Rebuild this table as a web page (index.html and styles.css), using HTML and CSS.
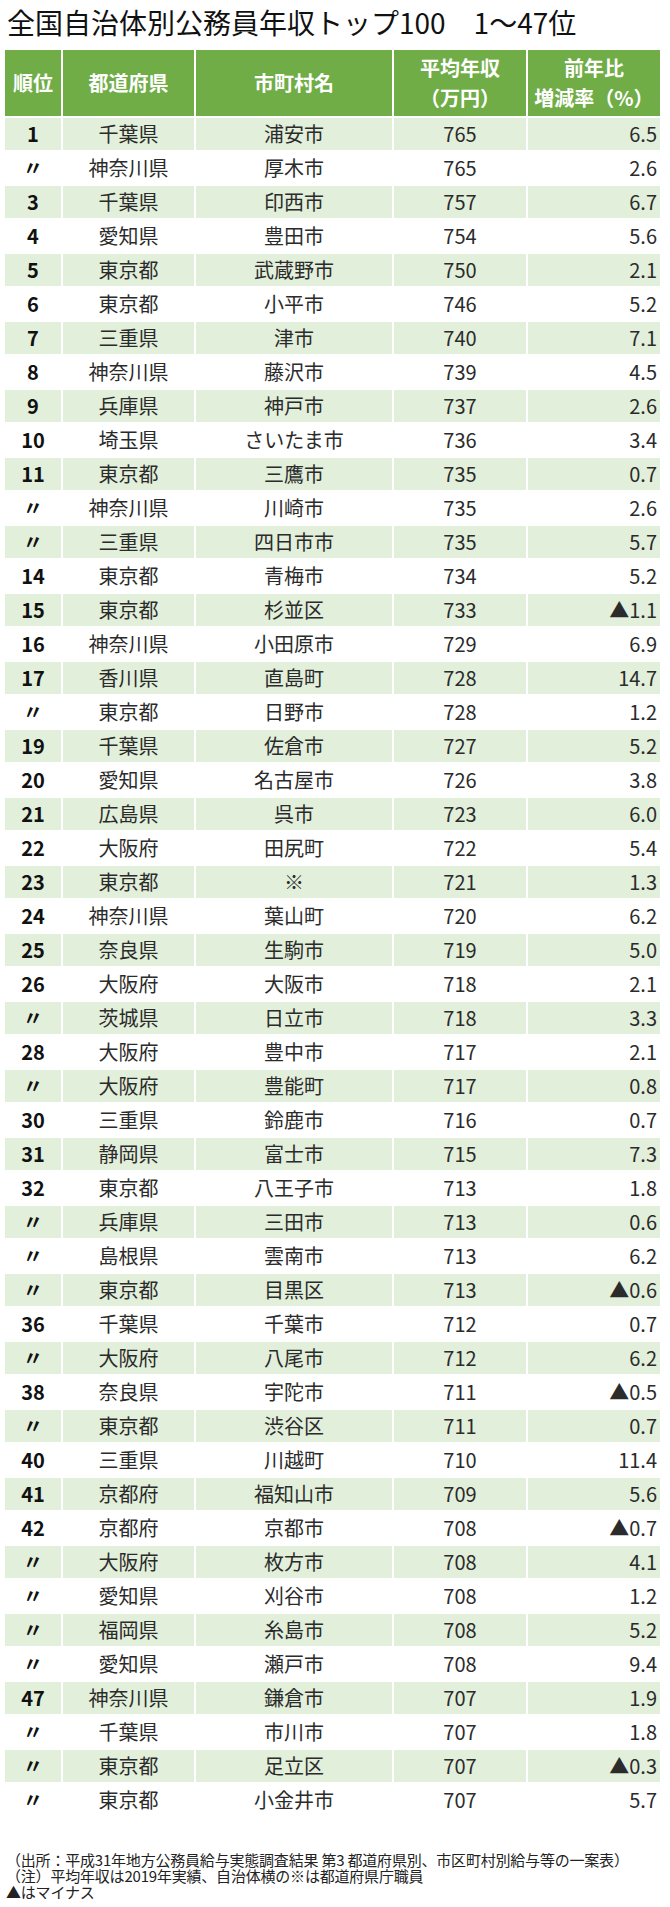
FILE: index.html
```html
<!DOCTYPE html>
<html lang="ja">
<head>
<meta charset="utf-8">
<title>全国自治体別公務員年収トップ100</title>
<link rel="stylesheet" href="styles.css">
</head>
<body>
<h1 class="title">全国自治体別公務員年収トップ100　1〜47位</h1>
<table class="rank-table">
  <colgroup>
    <col class="c-rank"><col class="c-pref"><col class="c-city"><col class="c-pay"><col class="c-rate">
  </colgroup>
  <thead>
    <tr>
      <th>順位</th>
      <th>都道府県</th>
      <th>市町村名</th>
      <th>平均年収<br>（万円）</th>
      <th>前年比<br>増減率（%）</th>
    </tr>
  </thead>
  <tbody>
    <tr><td class="rank">1</td><td>千葉県</td><td>浦安市</td><td>765</td><td class="rate">6.5</td></tr>
    <tr><td class="rank">〃</td><td>神奈川県</td><td>厚木市</td><td>765</td><td class="rate">2.6</td></tr>
    <tr><td class="rank">3</td><td>千葉県</td><td>印西市</td><td>757</td><td class="rate">6.7</td></tr>
    <tr><td class="rank">4</td><td>愛知県</td><td>豊田市</td><td>754</td><td class="rate">5.6</td></tr>
    <tr><td class="rank">5</td><td>東京都</td><td>武蔵野市</td><td>750</td><td class="rate">2.1</td></tr>
    <tr><td class="rank">6</td><td>東京都</td><td>小平市</td><td>746</td><td class="rate">5.2</td></tr>
    <tr><td class="rank">7</td><td>三重県</td><td>津市</td><td>740</td><td class="rate">7.1</td></tr>
    <tr><td class="rank">8</td><td>神奈川県</td><td>藤沢市</td><td>739</td><td class="rate">4.5</td></tr>
    <tr><td class="rank">9</td><td>兵庫県</td><td>神戸市</td><td>737</td><td class="rate">2.6</td></tr>
    <tr><td class="rank">10</td><td>埼玉県</td><td>さいたま市</td><td>736</td><td class="rate">3.4</td></tr>
    <tr><td class="rank">11</td><td>東京都</td><td>三鷹市</td><td>735</td><td class="rate">0.7</td></tr>
    <tr><td class="rank">〃</td><td>神奈川県</td><td>川崎市</td><td>735</td><td class="rate">2.6</td></tr>
    <tr><td class="rank">〃</td><td>三重県</td><td>四日市市</td><td>735</td><td class="rate">5.7</td></tr>
    <tr><td class="rank">14</td><td>東京都</td><td>青梅市</td><td>734</td><td class="rate">5.2</td></tr>
    <tr><td class="rank">15</td><td>東京都</td><td>杉並区</td><td>733</td><td class="rate">▲1.1</td></tr>
    <tr><td class="rank">16</td><td>神奈川県</td><td>小田原市</td><td>729</td><td class="rate">6.9</td></tr>
    <tr><td class="rank">17</td><td>香川県</td><td>直島町</td><td>728</td><td class="rate">14.7</td></tr>
    <tr><td class="rank">〃</td><td>東京都</td><td>日野市</td><td>728</td><td class="rate">1.2</td></tr>
    <tr><td class="rank">19</td><td>千葉県</td><td>佐倉市</td><td>727</td><td class="rate">5.2</td></tr>
    <tr><td class="rank">20</td><td>愛知県</td><td>名古屋市</td><td>726</td><td class="rate">3.8</td></tr>
    <tr><td class="rank">21</td><td>広島県</td><td>呉市</td><td>723</td><td class="rate">6.0</td></tr>
    <tr><td class="rank">22</td><td>大阪府</td><td>田尻町</td><td>722</td><td class="rate">5.4</td></tr>
    <tr><td class="rank">23</td><td>東京都</td><td>※</td><td>721</td><td class="rate">1.3</td></tr>
    <tr><td class="rank">24</td><td>神奈川県</td><td>葉山町</td><td>720</td><td class="rate">6.2</td></tr>
    <tr><td class="rank">25</td><td>奈良県</td><td>生駒市</td><td>719</td><td class="rate">5.0</td></tr>
    <tr><td class="rank">26</td><td>大阪府</td><td>大阪市</td><td>718</td><td class="rate">2.1</td></tr>
    <tr><td class="rank">〃</td><td>茨城県</td><td>日立市</td><td>718</td><td class="rate">3.3</td></tr>
    <tr><td class="rank">28</td><td>大阪府</td><td>豊中市</td><td>717</td><td class="rate">2.1</td></tr>
    <tr><td class="rank">〃</td><td>大阪府</td><td>豊能町</td><td>717</td><td class="rate">0.8</td></tr>
    <tr><td class="rank">30</td><td>三重県</td><td>鈴鹿市</td><td>716</td><td class="rate">0.7</td></tr>
    <tr><td class="rank">31</td><td>静岡県</td><td>富士市</td><td>715</td><td class="rate">7.3</td></tr>
    <tr><td class="rank">32</td><td>東京都</td><td>八王子市</td><td>713</td><td class="rate">1.8</td></tr>
    <tr><td class="rank">〃</td><td>兵庫県</td><td>三田市</td><td>713</td><td class="rate">0.6</td></tr>
    <tr><td class="rank">〃</td><td>島根県</td><td>雲南市</td><td>713</td><td class="rate">6.2</td></tr>
    <tr><td class="rank">〃</td><td>東京都</td><td>目黒区</td><td>713</td><td class="rate">▲0.6</td></tr>
    <tr><td class="rank">36</td><td>千葉県</td><td>千葉市</td><td>712</td><td class="rate">0.7</td></tr>
    <tr><td class="rank">〃</td><td>大阪府</td><td>八尾市</td><td>712</td><td class="rate">6.2</td></tr>
    <tr><td class="rank">38</td><td>奈良県</td><td>宇陀市</td><td>711</td><td class="rate">▲0.5</td></tr>
    <tr><td class="rank">〃</td><td>東京都</td><td>渋谷区</td><td>711</td><td class="rate">0.7</td></tr>
    <tr><td class="rank">40</td><td>三重県</td><td>川越町</td><td>710</td><td class="rate">11.4</td></tr>
    <tr><td class="rank">41</td><td>京都府</td><td>福知山市</td><td>709</td><td class="rate">5.6</td></tr>
    <tr><td class="rank">42</td><td>京都府</td><td>京都市</td><td>708</td><td class="rate">▲0.7</td></tr>
    <tr><td class="rank">〃</td><td>大阪府</td><td>枚方市</td><td>708</td><td class="rate">4.1</td></tr>
    <tr><td class="rank">〃</td><td>愛知県</td><td>刈谷市</td><td>708</td><td class="rate">1.2</td></tr>
    <tr><td class="rank">〃</td><td>福岡県</td><td>糸島市</td><td>708</td><td class="rate">5.2</td></tr>
    <tr><td class="rank">〃</td><td>愛知県</td><td>瀬戸市</td><td>708</td><td class="rate">9.4</td></tr>
    <tr><td class="rank">47</td><td>神奈川県</td><td>鎌倉市</td><td>707</td><td class="rate">1.9</td></tr>
    <tr><td class="rank">〃</td><td>千葉県</td><td>市川市</td><td>707</td><td class="rate">1.8</td></tr>
    <tr><td class="rank">〃</td><td>東京都</td><td>足立区</td><td>707</td><td class="rate">▲0.3</td></tr>
    <tr><td class="rank">〃</td><td>東京都</td><td>小金井市</td><td>707</td><td class="rate">5.7</td></tr>
  </tbody>
</table>
<div class="notes">
  <p>（出所：平成31年地方公務員給与実態調査結果 第3 都道府県別、市区町村別給与等の一案表）</p>
  <p>（注）平均年収は2019年実績、自治体横の※は都道府県庁職員</p>
  <p>▲はマイナス</p>
</div>
</body>
</html>
```

FILE: styles.css
```css
html, body {
  margin: 0;
  padding: 0;
  background: #ffffff;
}

body {
  font-family: "Noto Sans CJK JP", "Noto Sans", sans-serif;
  color: #222222;
}

.title {
  margin: 0;
  padding: 5px 0 9px 7px;
  font-size: 28px;
  line-height: 34px;
  font-weight: 400;
  color: #111111;
  letter-spacing: 0;
}

.rank-table {
  margin-left: 3px;
  border-collapse: separate;
  border-spacing: 2px;
  table-layout: fixed;
  width: 659px;
}

.c-rank { width: 56px; }
.c-pref { width: 131px; }
.c-city { width: 196px; }
.c-pay  { width: 132px; }
.c-rate { width: 132px; }

.rank-table th {
  background: #70ad47;
  color: #ffffff;
  font-weight: 700;
  font-size: 20px;
  line-height: 30px;
  height: 66px;
  padding: 0;
  text-align: center;
  vertical-align: middle;
  white-space: nowrap;
}

.rank-table td {
  height: 32px;
  padding: 0;
  font-size: 20px;
  line-height: 32px;
  text-align: center;
  vertical-align: middle;
  color: #2b2b2b;
  white-space: nowrap;
}

.rank-table tbody tr:nth-child(odd) td {
  background: #e2efda;
}

.rank-table td.rank {
  font-weight: 700;
  color: #111111;
}

.rank-table td.rate {
  text-align: right;
  padding-right: 3px;
}

.notes {
  margin-top: 34px;
  padding-left: 6px;
  font-size: 15px;
  line-height: 16px;
  letter-spacing: -0.2px;
  color: #222222;
  white-space: nowrap;
}

.notes p {
  margin: 0;
}
```
